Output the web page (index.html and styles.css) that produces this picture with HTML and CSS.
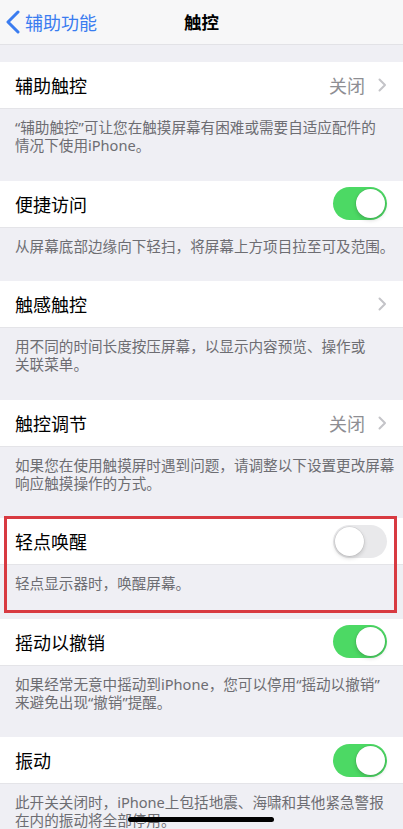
FILE: index.html
```html
<!DOCTYPE html>
<html lang="zh-CN">
<head>
<meta charset="utf-8">
<title>触控</title>
<link rel="stylesheet" href="styles.css">
</head>
<body>
<header class="nav">
  <div class="nav-back">
    <svg class="back-icon" width="14" height="24" viewBox="0 0 14 24"><polyline points="12,2 2,12 12,22" fill="none" stroke="#3a7cf0" stroke-width="3" stroke-linecap="round" stroke-linejoin="round"/></svg>
    <span class="back-text">辅助功能</span>
  </div>
  <div class="nav-title">触控</div>
  <div class="nav-spacer"></div>
</header>

<main class="list">
  <section class="group first">
    <div class="row">
      <span class="row-title">辅助触控</span>
      <span class="row-value">关闭</span>
      <svg class="chev" width="9" height="14" viewBox="0 0 9 14"><polyline points="1.5,1.5 7,7 1.5,12.5" fill="none" stroke="#c4c4c8" stroke-width="2" stroke-linecap="round" stroke-linejoin="round"/></svg>
    </div>
    <p class="footer">“辅助触控”可让您在触摸屏幕有困难或需要自适应配件的<br>情况下使用iPhone。</p>
  </section>

  <section class="group">
    <div class="row">
      <span class="row-title">便捷访问</span>
      <span class="switch on"></span>
    </div>
    <p class="footer">从屏幕底部边缘向下轻扫，将屏幕上方项目拉至可及范围。</p>
  </section>

  <section class="group">
    <div class="row">
      <span class="row-title">触感触控</span>
      <svg class="chev" width="9" height="14" viewBox="0 0 9 14"><polyline points="1.5,1.5 7,7 1.5,12.5" fill="none" stroke="#c4c4c8" stroke-width="2" stroke-linecap="round" stroke-linejoin="round"/></svg>
    </div>
    <p class="footer">用不同的时间长度按压屏幕，以显示内容预览、操作或<br>关联菜单。</p>
  </section>

  <section class="group">
    <div class="row">
      <span class="row-title">触控调节</span>
      <span class="row-value">关闭</span>
      <svg class="chev" width="9" height="14" viewBox="0 0 9 14"><polyline points="1.5,1.5 7,7 1.5,12.5" fill="none" stroke="#c4c4c8" stroke-width="2" stroke-linecap="round" stroke-linejoin="round"/></svg>
    </div>
    <p class="footer">如果您在使用触摸屏时遇到问题，请调整以下设置更改屏幕<br>响应触摸操作的方式。</p>
  </section>

  <section class="group highlighted">
    <div class="row">
      <span class="row-title">轻点唤醒</span>
      <span class="switch off"></span>
    </div>
    <p class="footer">轻点显示器时，唤醒屏幕。</p>
  </section>

  <section class="group">
    <div class="row">
      <span class="row-title">摇动以撤销</span>
      <span class="switch on"></span>
    </div>
    <p class="footer">如果经常无意中摇动到iPhone，您可以停用“摇动以撤销”<br>来避免出现“撤销”提醒。</p>
  </section>

  <section class="group">
    <div class="row">
      <span class="row-title">振动</span>
      <span class="switch on"></span>
    </div>
    <p class="footer">此开关关闭时，iPhone上包括地震、海啸和其他紧急警报<br>在内的振动将全部停用。</p>
  </section>
</main>

<div class="home-indicator"></div>
</body>
</html>
```

FILE: styles.css
```css
* { box-sizing: border-box; }

html, body {
  margin: 0;
  padding: 0;
  height: 100%;
  overflow: hidden;
}

body {
  background: #efeff4;
  font-family: "Noto Sans CJK SC", "Noto Sans", "Liberation Sans", sans-serif;
  color: #000;
  -webkit-font-smoothing: antialiased;
}

.nav {
  height: 45px;
  background: #f7f7f8;
  border-bottom: 1px solid #e2e2e6;
  display: grid;
  grid-template-columns: 1fr auto 1fr;
  align-items: center;
}

.nav-back {
  display: flex;
  align-items: center;
  padding-left: 6px;
  gap: 5px;
}

.back-icon { display: block; }

.back-text {
  font-size: 18px;
  color: #3a7cf0;
  line-height: 24px;
}

.nav-title {
  font-size: 17.5px;
  font-weight: 600;
  line-height: 24px;
}

.list {
  padding-top: 17px;
}

.group {
  position: relative;
}

.row {
  height: 47px;
  background: #fff;
  display: flex;
  align-items: center;
  padding: 0 16px 0 15px;
  border-bottom: 1px solid #e4e4e8;
}

.row-title {
  flex: 1;
  font-size: 18px;
  line-height: 24px;
}

.row-value {
  font-size: 18px;
  color: #8e8e93;
  line-height: 24px;
  margin-right: 13px;
}

.chev { display: block; }

.footer {
  margin: 0;
  padding: 9px 8px 26.5px 15px;
  font-family: "Noto Sans", "Noto Sans CJK SC", "Liberation Sans", sans-serif;
  font-size: 14.6px;
  line-height: 18px;
  color: #6d6d72;
  white-space: nowrap;
}

.switch {
  position: relative;
  width: 54px;
  height: 33px;
  border-radius: 17px;
  flex: none;
}

.switch.on {
  background: #4cd964;
}

.switch.off {
  background: #e9e9eb;
}

.switch::after {
  content: "";
  position: absolute;
  top: 2px;
  width: 29px;
  height: 29px;
  border-radius: 50%;
  background: #fff;
  box-shadow: 0 2px 4px rgba(0, 0, 0, 0.18), 0 0 0 0.5px rgba(0, 0, 0, 0.1);
}

.switch.on::after { right: 2px; }
.switch.off::after { left: 2px; }

.highlighted::after {
  content: "";
  position: absolute;
  top: -2px;
  left: 4px;
  right: 6px;
  bottom: 6px;
  border: 3px solid #d83a41;
  pointer-events: none;
}

.home-indicator {
  position: fixed;
  left: 128px;
  bottom: 7px;
  width: 146px;
  height: 5px;
  border-radius: 3px;
  background: #000;
}
```
